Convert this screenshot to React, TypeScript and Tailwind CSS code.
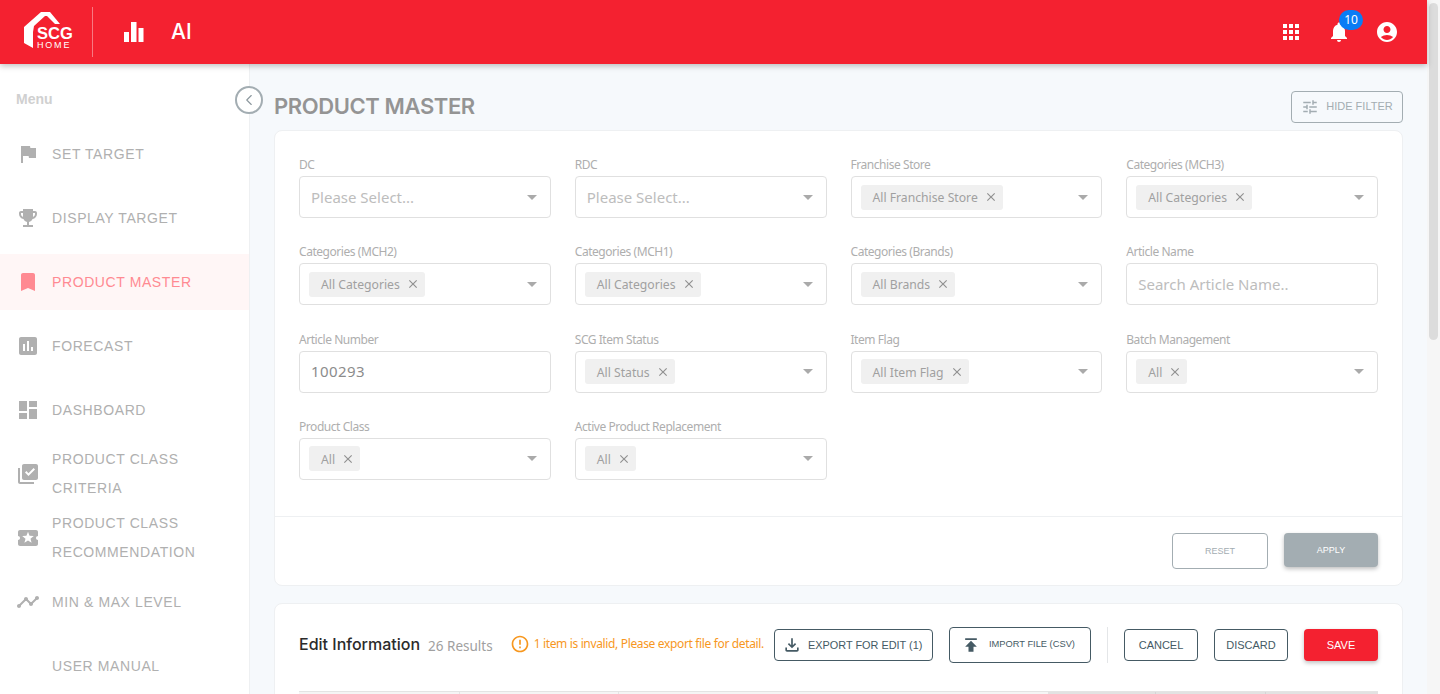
import type { ReactNode } from 'react';
import {
  MdAccountCircle,
  MdApps,
  MdAssessment,
  MdBookmark,
  MdClose,
  MdDashboard,
  MdEmojiEvents,
  MdErrorOutline,
  MdFlag,
  MdLibraryAddCheck,
  MdLocalActivity,
  MdNotifications,
  MdOutlineFileDownload,
  MdPublish,
  MdTimeline,
  MdTune,
} from 'react-icons/md';
import { ChevronLeft } from 'lucide-react';

const menu = [
  { label: ['SET TARGET'], icon: <MdFlag size={24} /> },
  { label: ['DISPLAY TARGET'], icon: <MdEmojiEvents size={24} /> },
  { label: ['PRODUCT MASTER'], icon: <MdBookmark size={24} />, active: true },
  { label: ['FORECAST'], icon: <MdAssessment size={24} /> },
  { label: ['DASHBOARD'], icon: <MdDashboard size={24} /> },
  { label: ['PRODUCT CLASS', 'CRITERIA'], icon: <MdLibraryAddCheck size={24} /> },
  { label: ['PRODUCT CLASS', 'RECOMMENDATION'], icon: <MdLocalActivity size={24} /> },
  { label: ['MIN & MAX LEVEL'], icon: <MdTimeline size={24} /> },
  { label: ['USER MANUAL'], icon: null },
];

type Field = { label: string; placeholder?: string; tag?: string; value?: string; text?: boolean };

const fields: Field[] = [
  { label: 'DC', placeholder: 'Please Select...' },
  { label: 'RDC', placeholder: 'Please Select...' },
  { label: 'Franchise Store', tag: 'All Franchise Store' },
  { label: 'Categories (MCH3)', tag: 'All Categories' },
  { label: 'Categories (MCH2)', tag: 'All Categories' },
  { label: 'Categories (MCH1)', tag: 'All Categories' },
  { label: 'Categories (Brands)', tag: 'All Brands' },
  { label: 'Article Name', placeholder: 'Search Article Name..', text: true },
  { label: 'Article Number', value: '100293', text: true },
  { label: 'SCG Item Status', tag: 'All Status' },
  { label: 'Item Flag', tag: 'All Item Flag' },
  { label: 'Batch Management', tag: 'All' },
  { label: 'Product Class', tag: 'All' },
  { label: 'Active Product Replacement', tag: 'All' },
];

function Logo() {
  return (
    <div className="relative w-[50px] h-[40px] shrink-0">
      <svg width="50" height="40" viewBox="0 0 50 40" className="absolute inset-0">
        <path d="M0 15 L17 0 L26 0 L36 12 L31 12 L23 4 L21 4 L10 14 L9 20 L9 36 L0 31 Z" fill="#fff" />
      </svg>
      <div className="absolute left-[13px] top-[14px] text-white font-['Liberation_Sans',sans-serif] font-bold text-[16.5px] leading-[15px]">
        SCG
      </div>
      <div className="absolute left-[13px] top-[29px] text-white font-['Liberation_Sans',sans-serif] text-[9px] leading-[9px] tracking-[1.8px]">
        HOME
      </div>
    </div>
  );
}

function Header() {
  return (
    <header className="h-16 shrink-0 bg-[#f42130] flex items-center pl-6 pr-7 shadow-[0_2px_6px_rgba(0,0,0,0.25)] relative z-10 text-white">
      <Logo />
      <div className="w-px h-[50px] bg-white/40 ml-[18px]" />
      <svg width="20" height="20" viewBox="0 0 20 20" className="ml-[31px]" fill="#fff">
        <rect x="0" y="10" width="5" height="10" />
        <rect x="7" y="0" width="5.5" height="20" />
        <rect x="14.5" y="6" width="5" height="14" />
      </svg>
      <span className="ml-[27px] text-[21px] font-medium font-['Inter',sans-serif]">AI</span>
      <div className="ml-auto flex items-center gap-6">
        <MdApps size={24} />
        <div className="relative">
          <MdNotifications size={24} />
          <span className="absolute -top-[10px] left-3 w-6 h-5 rounded-full bg-[#0a7cf5] text-[12px] leading-5 text-center font-['Noto_Sans',sans-serif]">
            10
          </span>
        </div>
        <MdAccountCircle size={24} />
      </div>
    </header>
  );
}

function Sidebar() {
  return (
    <aside className="w-[250px] shrink-0 bg-white border-r border-[#eef0f2] pt-[26px] font-['Liberation_Sans',sans-serif]">
      <div className="pl-4 h-[36px] text-[14px] font-bold text-[#d0d0d0] leading-[18px]">Menu</div>
      <nav className="flex flex-col gap-2">
        {menu.map((item) => (
          <div
            key={item.label.join(' ')}
            className={`h-14 flex items-center ${item.active ? 'bg-[#fff6f6] text-[#ff8a92]' : 'text-[#b0b0b0]'}`}
          >
            <div className="w-[52px] pl-4 shrink-0">{item.icon}</div>
            <div className="text-[14px] leading-[29px] tracking-[0.6px] whitespace-nowrap">
              {item.label.map((line) => (
                <div key={line}>{line}</div>
              ))}
            </div>
          </div>
        ))}
      </nav>
    </aside>
  );
}

function FilterField({ field }: { field: Field }) {
  return (
    <div>
      <div className="h-5 text-[12px] leading-[17px] tracking-[-0.45px] text-[#aeaeae]">{field.label}</div>
      <div className="h-[42px] rounded border border-[#e0e0e0] flex items-center bg-white">
        {field.tag ? (
          <span className="ml-[9px] h-[25px] pl-3 pr-[5px] rounded-[3px] bg-[#f0f0f0] flex items-center text-[12.2px] text-[#a0a0a0] whitespace-nowrap">
            <span className="pt-[2px]">{field.tag}</span>
            <MdClose size={14} className="ml-[6px] text-[#909090]" />
          </span>
        ) : (
          <span className={`ml-[11px] text-[15px] ${field.value ? 'text-[#8c8c8c] tracking-[0.4px]' : 'text-[#bdbdbd]'}`}>
            {field.value ?? field.placeholder}
          </span>
        )}
        {!field.text && (
          <span className="ml-auto mr-[13px] w-0 h-0 border-x-[5px] border-x-transparent border-t-[5px] border-t-[#aaaaaa]" />
        )}
      </div>
    </div>
  );
}

function OutlineButton({ children, className }: { children: ReactNode; className: string }) {
  return (
    <button className={`shrink-0 rounded border border-[#455a64] text-[#455a64] flex items-center whitespace-nowrap font-['Liberation_Sans',sans-serif] ${className}`}>
      {children}
    </button>
  );
}

function Content() {
  return (
    <main className="flex-1 min-w-0 bg-[#f6f9fc] px-6 relative">
      <button className="absolute -left-[15px] top-[22px] w-7 h-7 rounded-full border-2 border-[#a3adb2] bg-white flex items-center justify-center text-[#8b979d]">
        <ChevronLeft size={18} strokeWidth={1.5} />
      </button>
      <div className="h-[67px] flex items-center justify-between">
        <h1 className="text-[22px] font-semibold text-[#949494] font-['Inter',sans-serif] tracking-[-0.4px] pt-[18px]">PRODUCT MASTER</h1>
        <button className="w-28 h-8 mt-[18px] rounded border border-[#a3adb2] flex items-center justify-center gap-[7px] text-[11px] text-[#a3adb2] font-['Liberation_Sans',sans-serif]">
          <MdTune size={18} />
          HIDE FILTER
        </button>
      </div>
      <section className="-mt-px bg-white rounded-lg border border-[#eef0f2] font-['Noto_Sans',sans-serif]">
        <div className="px-6 pt-[25px] pb-[11px] grid grid-cols-4 gap-x-6 auto-rows-[87.33px]">
          {fields.map((field) => (
            <FilterField key={field.label} field={field} />
          ))}
        </div>
        <div className="h-[69px] border-t border-[#eef0f2] flex justify-end pr-6 pt-4 gap-4 font-['Liberation_Sans',sans-serif]">
          <button className="w-24 h-9 rounded border border-[#a3adb2] text-[9px] text-[#a3adb2]">RESET</button>
          <button className="w-[94px] h-[34px] rounded bg-[#a3adb2] text-white text-[9px] shadow-[0_2px_4px_rgba(0,0,0,0.25)]">APPLY</button>
        </div>
      </section>
      <section className="mt-[17px] bg-white rounded-t-lg border border-[#eef0f2] px-6 h-[120px]">
        <div className="h-20 flex items-center">
          <h2 className="text-[16px] font-medium text-[#2b2b2b] font-['Inter',sans-serif]">Edit Information</h2>
          <span className="ml-2 text-[13.5px] text-[#a0a0a0] font-['Noto_Sans',sans-serif] pt-[3px]">26 Results</span>
          <MdErrorOutline size={20} className="ml-[17px] text-[#f7971e]" />
          <span className="ml-[4px] text-[12px] tracking-[-0.35px] whitespace-nowrap text-[#f7971e] font-['Noto_Sans',sans-serif]">1 item is invalid, Please export file for detail.</span>
          <div className="ml-auto mt-[2px] flex items-center gap-4">
            <OutlineButton className="w-[159px] h-8 text-[10.9px] pl-[7px] gap-[6px]">
              <MdOutlineFileDownload size={20} />
              EXPORT FOR EDIT (1)
            </OutlineButton>
            <OutlineButton className="w-[142px] h-9 text-[9.3px] pl-[11px] gap-[8px]">
              <MdPublish size={20} />
              IMPORT FILE (CSV)
            </OutlineButton>
            <div className="w-px h-9 bg-[#e4e6e8]" />
            <OutlineButton className="w-[74px] h-8 text-[11px] justify-center">CANCEL</OutlineButton>
            <OutlineButton className="w-[74px] h-8 text-[11px] justify-center">DISCARD</OutlineButton>
            <button className="w-[74px] h-8 rounded bg-[#f42130] text-white text-[11px] font-['Liberation_Sans',sans-serif] shadow-[0_2px_4px_rgba(0,0,0,0.25)]">SAVE</button>
          </div>
        </div>
        <div className="mt-[7px] h-8 flex bg-[#f5f5f5] border-t border-[#e4e4e4]">
          <div className="w-[161px] border-r border-[#e4e4e4]" />
          <div className="w-[159px] border-r border-[#e4e4e4]" />
          <div className="flex-1" />
          <div className="w-[108px] bg-[#e2e2e2] border-r border-[#d4d4d4]" />
          <div className="w-[110px] bg-[#e2e2e2] border-r border-[#d4d4d4]" />
          <div className="w-[112px] bg-[#e2e2e2]" />
        </div>
      </section>
    </main>
  );
}

export default function App() {
  return (
    <div className="h-screen overflow-hidden flex font-['Noto_Sans',sans-serif]">
      <div className="flex-1 min-w-0 flex flex-col">
        <Header />
        <div className="flex-1 min-h-0 flex overflow-hidden">
          <Sidebar />
          <Content />
        </div>
      </div>
      <div className="w-[13px] shrink-0 bg-[#f6f6f6] px-[2px] pt-[3px]">
        <div className="h-[337px] rounded-full bg-[#dcdcdc]" />
      </div>
    </div>
  );
}
